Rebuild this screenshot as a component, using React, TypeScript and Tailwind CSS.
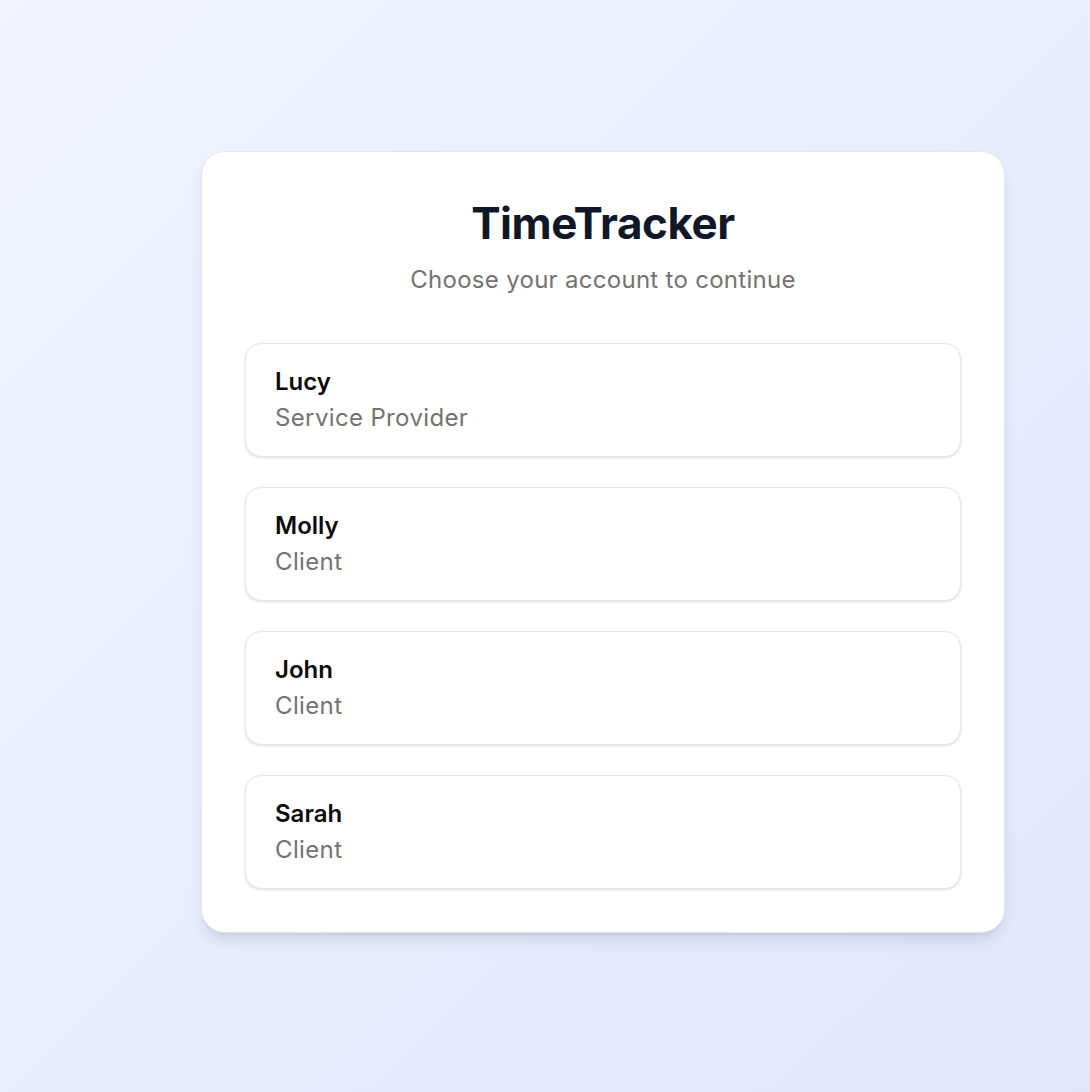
const accounts = [
  { name: "Lucy", role: "Service Provider" },
  { name: "Molly", role: "Client" },
  { name: "John", role: "Client" },
  { name: "Sarah", role: "Client" },
];

export default function App() {
  return (
    <div className="min-h-screen w-full bg-gradient-to-br from-[#eff4ff] to-[#e0e7fd] pt-[151px] font-['Inter',sans-serif]">
      <div className="ml-[201px] w-[804px] rounded-3xl border border-gray-200 bg-white p-[43px] shadow-lg">
        <div className="flex flex-col items-center">
          <h1 className="text-[44px] font-bold leading-[56px] tracking-[-0.01em] text-gray-900">
            TimeTracker
          </h1>
          <p className="mt-[11px] text-2xl leading-9 tracking-[0.012em] text-[#737373]">
            Choose your account to continue
          </p>
        </div>

        <div className="mt-[45px] flex flex-col gap-[30px]">
          {accounts.map((a) => (
            <button
              key={a.name}
              className="flex flex-col items-start rounded-2xl border border-gray-200 bg-white px-[29px] py-5 text-left shadow-sm"
            >
              <span className="text-2xl font-semibold leading-9 text-neutral-950">
                {a.name}
              </span>
              <span className="text-2xl leading-9 tracking-[0.015em] text-[#737373]">
                {a.role}
              </span>
            </button>
          ))}
        </div>
      </div>
    </div>
  );
}
